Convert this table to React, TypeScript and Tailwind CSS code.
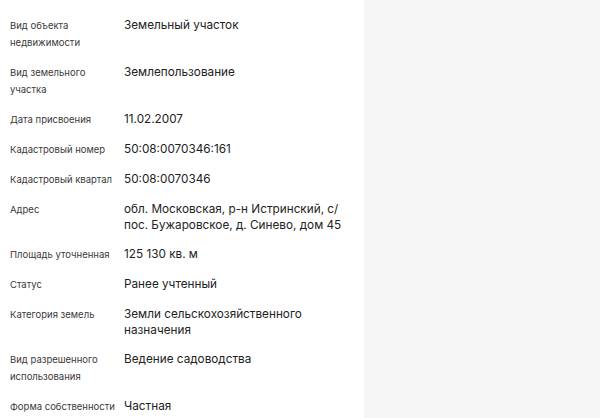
const rows: { label: string; value: React.ReactNode }[] = [
  { label: "Вид объекта недвижимости", value: "Земельный участок" },
  { label: "Вид земельного участка", value: "Землепользование" },
  { label: "Дата присвоения", value: "11.02.2007" },
  { label: "Кадастровый номер", value: "50:08:0070346:161" },
  { label: "Кадастровый квартал", value: "50:08:0070346" },
  {
    label: "Адрес",
    value: (
      <>
        обл. Московская, р-н Истринский, с/
        <br />
        пос. Бужаровское, д. Синево, дом 45
      </>
    ),
  },
  { label: "Площадь уточненная", value: "125 130 кв. м" },
  { label: "Статус", value: "Ранее учтенный" },
  {
    label: "Категория земель",
    value: (
      <>
        Земли сельскохозяйственного
        <br />
        назначения
      </>
    ),
  },
  { label: "Вид разрешенного использования", value: "Ведение садоводства" },
  { label: "Форма собственности", value: "Частная" },
]

export default function App() {
  return (
    <div className="flex h-[418px] w-[600px] overflow-hidden bg-white font-['Inter',sans-serif]">
      <div className="w-[364px] shrink-0 pl-[10px] pt-[17px]">
        <div className="flex flex-col gap-[13px]">
          {rows.map((r) => (
            <div key={r.label} className="flex">
              <div className="w-[114px] shrink-0 pr-[8px] text-[9.5px] leading-[17px] text-[#3a3a3a]">
                {r.label}
              </div>
              <div className="w-[236px] whitespace-nowrap text-[11.75px] leading-[16px] text-[#222]">
                {r.value}
              </div>
            </div>
          ))}
        </div>
      </div>
      <div className="flex-1 bg-[#f5f5f5]" />
    </div>
  )
}
